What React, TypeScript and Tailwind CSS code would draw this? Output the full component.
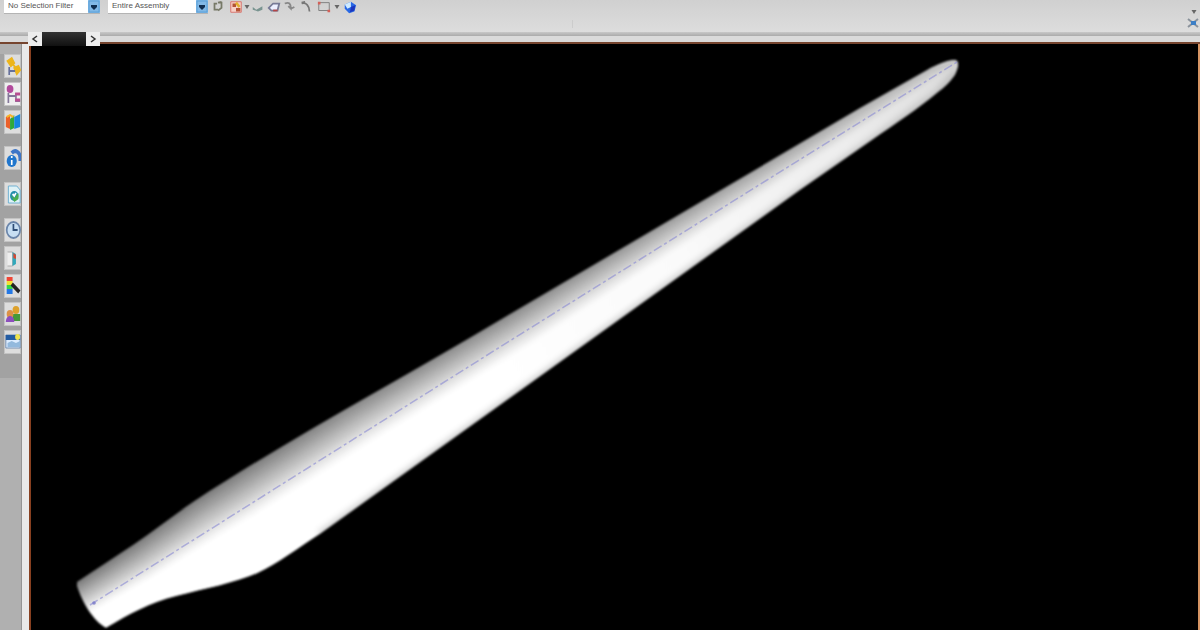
import React from "react";

type Point = [number, number];

const OUTLINE =
  "M77 582 C96 569 115 557 133 545 C154 531 174 515 193 502 C290 438 400 380 500 320 L738 180 L860 108 L927 70 C938 64 950 59 956 60 C960 62 958 69 955 75 C950 82 945 87 937 93 C918 109 895 124 872 140 L800 190 L535 380 L320 534 C300 547 277 564 258 573 C235 583 204 589 177 596 C149 603 130 614 106 628 C93 621 82 602 77 586 Z";

const RIDGE: Point[] = [[47, 602], [133, 545], [193, 502], [228, 480], [340, 411], [500, 320], [738, 180], [860, 108], [927, 70], [957, 60]];
const CREST: Point[] = [[62, 628], [152, 577], [218, 536], [257, 513], [373, 440], [532, 343], [761, 195], [878, 118], [938, 78], [958, 65]];
const BANDS = 20;

function bandPath(index: number) {
  const at = (t: number) =>
    RIDGE.map(([x, y], i) => `${x + (CREST[i][0] - x) * t} ${y + (CREST[i][1] - y) * t}`);
  const upper = at(index === 0 ? -0.1 : index / BANDS);
  const lower = at((index + 1) / BANDS).reverse();
  return `M${[...upper, ...lower].join(" L")} Z`;
}

function Blade() {
  return (
    <svg viewBox="31 44 1167 586" className="block h-auto w-full" role="img" aria-label="Shaded blade model">
      <defs>
        <clipPath id="blade"><path d={OUTLINE} /></clipPath>
        <linearGradient id="body" gradientUnits="userSpaceOnUse" x1="480" y1="360" x2="958" y2="64">
          <stop offset="0" stopColor="#fff" />
          <stop offset="0.4" stopColor="#fafafa" />
          <stop offset="0.75" stopColor="#ededed" />
          <stop offset="1" stopColor="#dcdcdc" />
        </linearGradient>
        <linearGradient id="shade" gradientUnits="userSpaceOnUse" x1="80" y1="590" x2="958" y2="64">
          <stop offset="0" stopColor="#505050" />
          <stop offset="0.5" stopColor="#686868" />
          <stop offset="0.85" stopColor="#8e8e8e" />
          <stop offset="1" stopColor="#b0b0b0" />
        </linearGradient>
        <filter id="soft"><feGaussianBlur stdDeviation="1.2" /></filter>
        <filter id="edge"><feGaussianBlur stdDeviation="3" /></filter>
        <filter id="rim"><feGaussianBlur stdDeviation="0.8" /></filter>
      </defs>
      <g filter="url(#rim)">
        <g clipPath="url(#blade)">
          <path d={OUTLINE} fill="url(#body)" />
          <g filter="url(#soft)">
            {Array.from({ length: BANDS }, (_, i) => (
              <path key={i} d={bandPath(i)} fill="url(#shade)" opacity={0.8 * Math.pow(1 - i / BANDS, 1.1)} />
            ))}
          </g>
          <path d="M958 70 L937 94 L872 141 L800 191 L535 381 L320 535" fill="none" stroke="#aaa" strokeWidth="7" opacity="0.65" filter="url(#edge)" />
        </g>
      </g>
      <path d="M90 605 L500 347 L767 180 L957 62" fill="none" stroke="#8888d4" strokeWidth="1.5" strokeDasharray="9 3 3 3" opacity="0.6" />
      <circle cx="94" cy="603" r="1.8" fill="#7777c8" opacity="0.8" />
    </svg>
  );
}

const tabs = [
  { name: "Assembly Navigator", gap: "mt-0", art: <><path d="M3 5l5-3 3 5-4 3zM11 12l5-2 2 4-4 4z" fill="#edb51b" stroke="#edb51b" strokeWidth="2" /><path d="M8 7l6 6" stroke="#edb51b" strokeWidth="2" /><path d="M5 11v8m0-4h7" stroke="#66709b" strokeWidth="2" /></> },
  { name: "Constraint Navigator", gap: "mt-1", art: <><circle cx="6" cy="5" r="4" fill="#b24a9c" /><path d="M4 9v10m0-7h8m1-3v8h5" stroke="#84779a" strokeWidth="2" fill="none" /><path d="M12 10h6M12 16h6" stroke="#b84d91" strokeWidth="3" /></> },
  { name: "Part Navigator", gap: "mt-1", art: <><path d="M1 5l5-2v14l-5-2z" fill="#eb602a" /><path d="M6 7l5-4v13l-5 2z" fill="#31a93a" /><path d="M11 5l7-3v13l-7 2z" fill="#1686df" /><path d="M2 5l4-2 4 2" stroke="#f7b527" strokeWidth="2" fill="none" /></> },
  { name: "Internet Explorer", gap: "mt-3", art: <><path d="M8 5c4-4 10-1 10 5v3" stroke="#3c75c7" strokeWidth="4" fill="none" /><circle cx="8" cy="13" r="6" fill="#2076cd" /><path d="M8 12v5M8 8v2" stroke="#fff" strokeWidth="2" /></> },
  { name: "Reuse Library", gap: "mt-3", art: <><path d="M4 2h10l4 4v13H4z" fill="#dff2f7" stroke="#67acd0" /><circle cx="11" cy="12" r="5" fill="#228dac" /><path d="M7 11l4 3 5-5v6l-5 3z" fill="#4aae50" /><path d="M9 10l2 2 2-3" stroke="#fff" strokeWidth="2" fill="none" /></> },
  { name: "History", gap: "mt-3", art: <><circle cx="10" cy="10" r="8" fill="#c7def3" stroke="#6a85aa" strokeWidth="2" /><path d="M10 4v6h5" stroke="#304e77" strokeWidth="2" fill="none" /></> },
  { name: "Process Studio", gap: "mt-1", art: <><path d="M3 4h6v14H3" fill="#eee" stroke="#aaa" /><path d="M9 4l4 2v10l-4 2z" fill="#31a8bb" /><path d="M10 5l3 2v4l-3-1z" fill="#d9472f" /></> },
  { name: "Materials", gap: "mt-1", art: <><path d="M2 1h7v4H2z" fill="#f04635" /><path d="M2 5h7v4H2z" fill="#f3df31" /><path d="M2 9h7v4H2z" fill="#37d746" /><path d="M2 13h7v5H2z" fill="#2478e5" /><path d="M8 8l9 8" stroke="#222" strokeWidth="4" /></> },
  { name: "Roles", gap: "mt-1", art: <><circle cx="13" cy="6" r="4" fill="#dda12c" /><path d="M9 10h9v7H9z" fill="#45993a" /><circle cx="6" cy="10" r="4" fill="#dc9146" /><path d="M1 18c0-8 10-8 10 0z" fill="#8d4fbd" /></> },
  { name: "System Scenes", gap: "mt-1", art: <><path d="M1 3h17v13H1z" fill="#dcecff" stroke="#6d89ae" /><path d="M1 3h17v5H1z" fill="#235ca3" /><path d="M3 11l5-2 5 2 5-2v6H3z" fill="#93b9dd" /><circle cx="15" cy="5" r="3" fill="#ede34e" /></> },
];

function FilterSelect({ label, value, width }: { label: string; value: string; width: string }) {
  return (
    <div className="relative h-3.5 border-b border-[#b4b4b4] bg-white">
      <select aria-label={label} className={`block appearance-none bg-transparent pl-1 text-[8px] leading-3 text-[#555] outline-none ${width}`}>
        <option>{value}</option>
      </select>
      <svg viewBox="0 0 12 13" className="pointer-events-none absolute top-0 right-0 h-[13px] w-3 bg-[#82b9e7]">
        <path d="M3 5h6v2L6 10 3 7z" fill="#102e50" /><path d="M1 1h10v11H1z" fill="none" stroke="#5aa0d8" />
      </svg>
    </div>
  );
}

function Tool({ label, width, children }: { label: string; width: string; children: React.ReactNode }) {
  return (
    <button aria-label={label} className={`flex h-3.5 items-center justify-center ${width}`}>
      <svg viewBox="0 0 16 16" className="size-3.5" fill="none">{children}</svg>
    </button>
  );
}

function DropArrow() {
  return <svg viewBox="0 0 5 4" className="h-1 w-1.5"><path d="M0 0h5L2.5 4z" fill="#666" /></svg>;
}

export default function App() {
  return (
    <main className="flex h-screen min-h-96 flex-col overflow-hidden bg-[#b0b0b0] font-['Liberation_Sans',sans-serif]">
      <header className="relative h-11 shrink-0 border-b-2 border-[#76452f] bg-[#d8d8d8]">
        <div className="flex h-8 items-start bg-linear-to-b from-[#d0d0d0] to-[#dddddd] pl-1">
          <FilterSelect label="Selection filter" value="No Selection Filter" width="w-24" />
          <div className="w-2" />
          <FilterSelect label="Selection scope" value="Entire Assembly" width="w-25" />
          <div className="flex items-center">
            <Tool label="Refresh selection" width="w-5"><path d="M7 4H4v7h4M8 12l4-3V3H9M8 3l4-1" stroke="#777967" strokeWidth="2" /></Tool>
            <Tool label="Snap point" width="w-4"><path d="M2 2h12v12H2z" fill="#f7d1c8" stroke="#d76b65" /><path d="M4 4h4v4H4zM8 9h5v4H8z" fill="#b35335" /><path d="M8 3l4 5" stroke="#dfb02f" strokeWidth="3" /></Tool>
            <DropArrow />
            <Tool label="Face selection" width="w-4"><path d="M2 8l4 3 7-4v4l-5 2-6-2z" fill="#799490" /></Tool>
            <Tool label="Body selection" width="w-4"><path d="M2 9l5-5h7l-2 8H5z" fill="#ecefff" stroke="#777a96" strokeWidth="2" /><path d="M7 12h5" stroke="#b54444" strokeWidth="2" /></Tool>
            <Tool label="Previous curve" width="w-4"><path d="M2 4c5-2 7 0 7 6l-3-3m3 3 4-2" stroke="#888" strokeWidth="2" /></Tool>
            <Tool label="Next curve" width="w-4"><path d="M3 4c5-2 9 3 9 9M3 3l4-1" stroke="#777" strokeWidth="2" /></Tool>
            <Tool label="Rectangle selection" width="w-5"><path d="M2 3h12v9H2z" stroke="#777" /><path d="M1 2h3v3H1zM12 11h3v3h-3z" fill="#d46058" /></Tool>
            <DropArrow />
            <Tool label="Shaded view" width="w-5"><path d="M2 5l7-3 6 4-2 7-6 2-5-5z" fill="#2868e5" /><path d="M2 5l7-3v6l-4 2z" fill="#ceeaff" /><path d="M9 8l5-2-1 6-5 2z" fill="#1c36bd" /></Tool>
          </div>
          <div className="mt-5 ml-53 h-2 w-px bg-[#cccccc]" />
          <div className="ml-auto flex flex-col items-end pt-2">
            <button aria-label="Toolbar options" className="flex h-2 w-3 items-center justify-center"><DropArrow /></button>
            <button aria-label="Close" className="flex size-3.5 items-center justify-center">
              <svg viewBox="0 0 12 12" className="size-3"><path d="M1 2l10 8M11 2L1 10" stroke="#8a929b" strokeWidth="2" /><path d="M4 4h5v4H4z" fill="#3c7fc6" /></svg>
            </button>
          </div>
        </div>
        <div className="h-1 bg-linear-to-b from-[#c8c8c8] to-[#aaaaaa]" />
        <div className="h-1.5 bg-[#dadada]" />
        <div className="absolute -bottom-1 left-7 flex h-3.5 items-stretch bg-linear-to-b from-[#333] to-[#111]">
          <button aria-label="Scroll tabs left" className="flex w-3.5 items-center justify-center bg-[#ededed]"><svg viewBox="0 0 8 8" className="size-2"><path d="M6 1L2 4l4 3" fill="none" stroke="#333" strokeWidth="1.5" /></svg></button>
          <div className="w-11" />
          <button aria-label="Scroll tabs right" className="flex w-3.5 items-center justify-center bg-[#ededed]"><svg viewBox="0 0 8 8" className="size-2"><path d="M2 1l4 3-4 3" fill="none" stroke="#333" strokeWidth="1.5" /></svg></button>
        </div>
      </header>
      <div className="flex min-h-0 flex-1">
        <aside className="w-[22px] shrink-0 border-r border-[#949494] bg-[#b0b0b0] pt-2.5">
          <nav aria-label="Resource bar" className="flex flex-col bg-[#a2a2a2] pb-6 pl-1">
            {tabs.map((tab, index) => (
              <button key={tab.name} aria-label={tab.name} className={`${tab.gap} h-6 w-full border border-[#c3c3c3] ${index === 1 ? "bg-[#eeeeee]" : "bg-[#dddddd]"}`}>
                <svg viewBox="0 0 19 20" className="h-5 w-4" preserveAspectRatio="none" fill="none">{tab.art}</svg>
              </button>
            ))}
          </nav>
        </aside>
        <div className="w-[7px] shrink-0 bg-[#e9e9e9]" />
        <section aria-label="Model view" className="min-w-0 flex-1 overflow-hidden border-r-2 border-l-2 border-r-[#d69463] border-l-[#884020] bg-black">
          <Blade />
        </section>
      </div>
    </main>
  );
}
